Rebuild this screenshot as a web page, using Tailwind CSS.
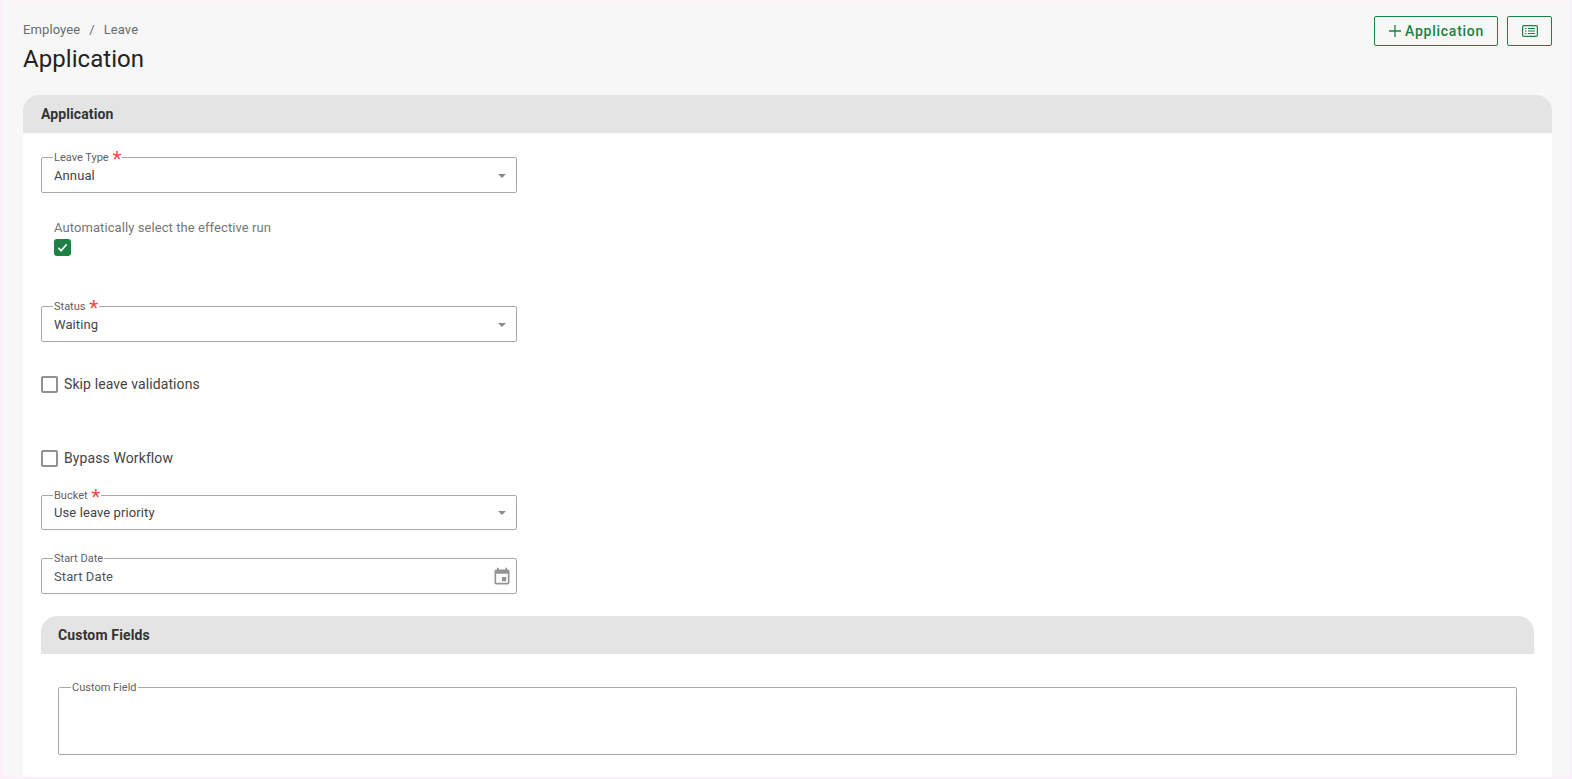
<!DOCTYPE html>
<html lang="en">
<head>
    <meta charset="UTF-8">
    <meta name="viewport" content="width=device-width, initial-scale=1.0">
    <title>Leave Application</title>
    <script src="https://cdn.jsdelivr.net/npm/@tailwindcss/browser@4"></script>
</head>
<body class="bg-[#fdeefb] font-['Roboto',sans-serif] text-[#333] overflow-hidden">
<div class="h-[779px] pt-px pr-[2px] pb-[2px] pl-[2px] overflow-hidden">
    <div class="h-full bg-[#f7f7f7] pl-[21px] pr-[18px] overflow-hidden">

        <!-- page header -->
        <div class="flex justify-between h-[94px]">
            <div>
                <div class="flex gap-[9px] mt-[21px] text-[13px] leading-[16px] tracking-[0.1px] text-[#6b6b6b]">
                    <span>Employee</span><span>/</span><span>Leave</span>
                </div>
                <h1 class="mt-[5px] text-[24px] leading-[32px] font-normal tracking-[0.05px] text-[#222]">Application</h1>
            </div>
            <div class="flex gap-[9px] mt-[15px] h-[30px]">
                <button class="flex items-center w-[124px] h-[30px] pl-[13px] gap-[3px] border border-[#1a8245] rounded-[2px] text-[#1a8245] text-[14px] font-medium tracking-[0.75px]">
                    <svg class="w-[14px] h-[14px]" viewBox="0 0 14 14" fill="none" stroke="currentColor" stroke-width="1.3"><path d="M7 1v12M1 7h12"/></svg>
                    <span>Application</span>
                </button>
                <button class="flex items-center justify-center w-[45px] h-[30px] border border-[#1a8245] rounded-[2px] text-[#1a8245]">
                    <svg class="w-[16px] h-[12px]" viewBox="0 0 16 12" fill="none" stroke="currentColor" stroke-width="1.2"><rect x="0.6" y="0.6" width="14.8" height="10.8" rx="1.5"/><path d="M6 3.5h7M6 6h7M6 8.5h7M3 3.5h1.5M3 6h1.5M3 8.5h1.5"/></svg>
                </button>
            </div>
        </div>

        <!-- card -->
        <div class="bg-white h-[700px] rounded-t-[16px]">
            <div class="h-[38px] flex items-center pl-[18px] bg-[#e4e4e4] rounded-t-[16px] text-[14px] font-bold tracking-[0.1px] text-[#333]">Application</div>

            <div class="pt-[17px] px-[18px]">
                <fieldset class="w-[476px] h-[43px] border border-[#a8a8a8] rounded-[2px] px-[11px]">
                    <legend class="px-px pt-[2px] text-[11px] leading-[11px] text-[#5f5f5f]">Leave Type <span class="relative top-px text-[#f54a4a] text-[21px] leading-[11px] align-[-4px] ml-px">*</span></legend>
                    <div class="flex items-center justify-between h-[24px] text-[13px] tracking-[0.1px] text-[#444] pl-px">
                        <span>Annual</span>
                        <span class="w-0 h-0 border-x-[4px] border-x-transparent border-t-[4px] border-t-[#8a8a8a] mr-[-1px]"></span>
                    </div>
                </fieldset>

                <div class="pl-[13px] mt-[27px]">
                    <div class="text-[13px] leading-[16px] tracking-[0.08px] text-[#757575]">Automatically select the effective run</div>
                    <div class="mt-[3px] w-[17px] h-[17px] rounded-[3px] bg-[#1a8245] flex items-center justify-center">
                        <svg class="w-[11px] h-[11px]" viewBox="0 0 12 12" fill="none" stroke="white" stroke-width="1.8"><path d="M1.5 6.5l3 3 6-7"/></svg>
                    </div>
                </div>

                <fieldset class="mt-[43px] w-[476px] h-[43px] border border-[#a8a8a8] rounded-[2px] px-[11px]">
                    <legend class="px-px pt-[2px] text-[11px] leading-[11px] text-[#5f5f5f]">Status <span class="relative top-px text-[#f54a4a] text-[21px] leading-[11px] align-[-4px] ml-px">*</span></legend>
                    <div class="flex items-center justify-between h-[24px] text-[13px] tracking-[0.1px] text-[#444] pl-px">
                        <span>Waiting</span>
                        <span class="w-0 h-0 border-x-[4px] border-x-transparent border-t-[4px] border-t-[#8a8a8a] mr-[-1px]"></span>
                    </div>
                </fieldset>

                <label class="mt-[34px] flex items-center gap-[6px] h-[17px] text-[14px] tracking-[0.1px] text-[#444]">
                    <span class="w-[17px] h-[17px] border-2 border-[#919191] rounded-[2px]"></span>Skip leave validations
                </label>
                <label class="mt-[57px] flex items-center gap-[6px] h-[17px] text-[14px] tracking-[0.1px] text-[#444]">
                    <span class="w-[17px] h-[17px] border-2 border-[#919191] rounded-[2px]"></span>Bypass Workflow
                </label>

                <fieldset class="mt-[21px] w-[476px] h-[42px] border border-[#a8a8a8] rounded-[2px] px-[11px]">
                    <legend class="px-px pt-[2px] text-[11px] leading-[11px] text-[#5f5f5f]">Bucket <span class="relative top-px text-[#f54a4a] text-[21px] leading-[11px] align-[-4px] ml-px">*</span></legend>
                    <div class="flex items-center justify-between h-[22px] text-[13px] tracking-[0.1px] text-[#444] pl-px">
                        <span>Use leave priority</span>
                        <span class="w-0 h-0 border-x-[4px] border-x-transparent border-t-[4px] border-t-[#8a8a8a] mr-[-1px]"></span>
                    </div>
                </fieldset>

                <fieldset class="mt-[23px] w-[476px] h-[41px] border border-[#a8a8a8] rounded-[2px] pl-[11px] pr-[4px]">
                    <legend class="px-px text-[11px] leading-[11px] text-[#5f5f5f]">Start Date</legend>
                    <div class="flex items-center justify-between h-[26px] text-[13px] tracking-[0.1px] text-[#555] pl-px">
                        <span>Start Date</span>
                        <svg class="w-[20px] h-[20px] text-[#949494]" viewBox="0 0 24 24" fill="currentColor"><path d="M17 12h-5v5h5v-5zM16 1v2H8V1H6v2H5c-1.11 0-1.99.9-1.99 2L3 19c0 1.1.89 2 2 2h14c1.1 0 2-.9 2-2V5c0-1.1-.9-2-2-2h-1V1h-2zm3 18H5V8h14v11z"/></svg>
                    </div>
                </fieldset>

                <!-- custom fields -->
                <div class="mt-[22px] h-[38px] flex items-center pl-[17px] bg-[#e4e4e4] rounded-t-[16px] text-[14px] font-bold tracking-[0.15px] text-[#333]">Custom Fields</div>
                <div class="pt-[28px] px-[17px]">
                    <fieldset class="h-[73px] border border-[#a8a8a8] rounded-[2px] pl-[12px]">
                        <legend class="px-px text-[11px] leading-[11px] text-[#5f5f5f]">Custom Field</legend>
                    </fieldset>
                </div>
            </div>
        </div>
    </div>
</div>
</body>
</html>
